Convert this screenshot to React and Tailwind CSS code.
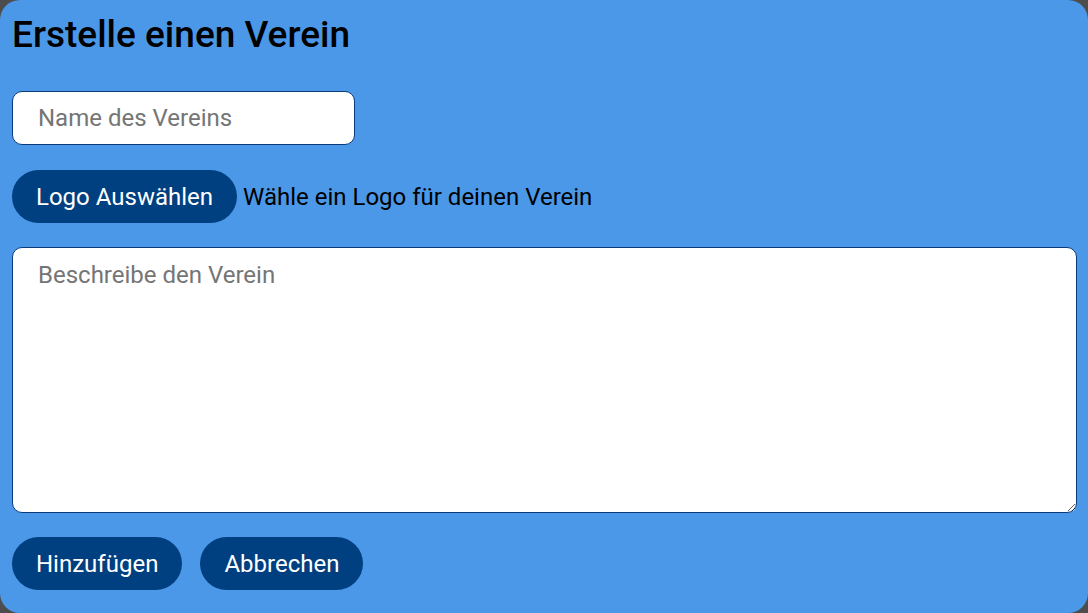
export default function App() {
  const font = { fontFamily: "Roboto, 'Noto Sans', sans-serif" };
  return (
    <div className="w-[1088px] h-[613px] bg-[#4d4d4d]" style={font}>
      <div className="w-full h-full bg-[#4b98e9] rounded-[20px] pl-3 pr-[11px] pt-[13px] flex flex-col">
        <h1 className="text-[37px] leading-[43px] text-black font-medium m-0">Erstelle einen Verein</h1>
        <input
          className="mt-[35px] w-[343px] h-[54px] rounded-[10px] border border-[#0a3a78] bg-white px-[25px] text-[24px] text-black placeholder:text-[#757575] outline-none"
          placeholder="Name des Vereins"
        />
        <div className="mt-[25px] flex items-center gap-[6px]">
          <button className="h-[53px] px-6 rounded-full bg-[#003f80] text-white text-[24px]">Logo Auswählen</button>
          <span className="text-[24px] text-black">Wähle ein Logo für deinen Verein</span>
        </div>
        <textarea
          className="mt-[24px] w-full h-[266px] rounded-[10px] border border-[#0a3a78] bg-white px-[25px] pt-[13px] text-[24px] leading-[28px] text-black placeholder:text-[#757575] outline-none"
          placeholder="Beschreibe den Verein"
        />
        <div className="mt-[24px] flex gap-[18px]">
          <button className="h-[53px] px-6 rounded-full bg-[#003f80] text-white text-[24px]">Hinzufügen</button>
          <button className="h-[53px] px-6 rounded-full bg-[#003f80] text-white text-[24px]">Abbrechen</button>
        </div>
      </div>
    </div>
  );
}
